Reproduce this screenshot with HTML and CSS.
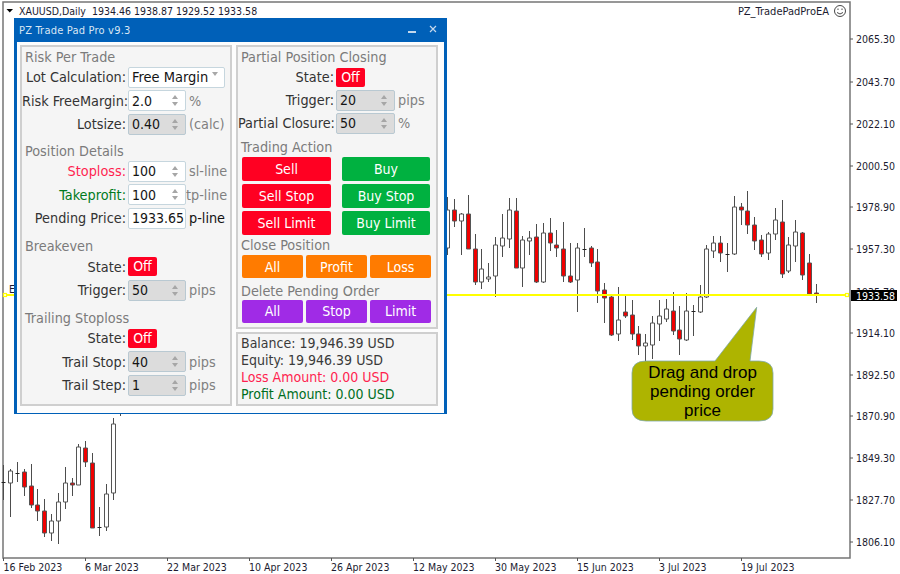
FILE: index.html
```html
<!DOCTYPE html>
<html lang="en">
<head>
<meta charset="utf-8">
<title>PZ Trade Pad Pro</title>
<link rel="stylesheet" href="styles.css">
</head>
<body>
<main class="screen">
  <svg class="chart" width="900" height="574" viewBox="0 0 900 574">
    <path class="frame" d="M3 2H850V558H3Z"/>
    <path class="frame-ticks" d="M850 39h3M850 82h3M850 124h3M850 166h3M850 207h3M850 249h3M850 333h3M850 375h3M850 416h3M850 458h3M850 500h3M850 542h3M3.500 558v3M85.500 558v3M167.500 558v3M249.500 558v3M331.500 558v3M413.500 558v3M495.500 558v3M577.500 558v3M659.500 558v3M741.500 558v3"/>
    <path class="tri" d="M6.500 9H13L9.750 12.500Z"/>
    <text class="t" x="19" y="15">XAUUSD,Daily&#160; 1934.46 1938.87 1929.52 1933.58</text>
    <text class="t t-name" x="829" y="15" text-anchor="end">PZ_TradePadProEA</text>
    <g class="smile">
      <circle cx="840" cy="11" r="5.500"/>
      <path d="M837 12.500q3 3 6 0"/>
      <path d="M838 8.500v1.500M842 8.500v1.500"/>
    </g>
    <text class="t" x="9" y="293">E</text>

    <path class="wick" d="M3.500 465V500M10.500 469V517M17.500 462V482M24.500 469V496M31.500 464V508M37.500 489V521M44.500 499V537M51.500 514V541M58.500 493V544M65.500 467V509M72.500 478V496M78.500 444V485M85.500 441V467M92.500 453V528M99.500 507V536M106.500 484V531M113.500 418V500M120.500 410V416
    M447.500 197V255M454.500 199V227M461.500 213V255M468.500 195V249M475.500 234V285M481.500 249V289M488.500 263V282M495.500 237V297M502.500 214V257M509.500 198V248M516.500 198V268M522.500 236V287M529.500 231V255M536.500 224V283M543.500 223V283M550.500 218V251M556.500 230V257M563.500 222V282M570.500 243V283M577.500 243V312M584.500 228V257M591.500 246V267M597.500 249V303M604.500 283V323M611.500 295V336M618.500 287V341M625.500 295V318M632.500 300V340M638.500 326V355M645.500 334V367M652.500 316V359M659.500 300V341M666.500 299V322M673.500 292V335M679.500 306V355M686.500 293V341M693.500 305V336M700.500 285V313M706.500 245V298M713.500 236V258M720.500 236V262M727.500 243V272M734.500 196V255M741.500 203V225M747.500 191V234M754.500 217V250M761.500 235V257M768.500 232V260M775.500 208V240M782.500 200V278M788.500 237V273M795.500 220V262M802.500 232V280M809.500 254V296M816.500 284V303"/>
    <path class="doji" d="M1.500 482.500h4M15.500 473.500h4M97.500 527.500h4M582.500 249.500h4M691.500 311.500h4M725.500 254.500h4"/>
    <path class="white" d="M8.500 471h4v12h-4zM49.500 521h4v12h-4zM56.500 502h4v19h-4zM63.500 483h4v19h-4zM76.500 447h4v38h-4zM104.500 494h4v33h-4zM111.500 424h4v69h-4z
    M445.500 210h4v38h-4zM459.500 214h4v7h-4zM479.500 269h4v13h-4zM486.500 277h4v2h-4zM493.500 245h4v31h-4zM500.500 238h4v8h-4zM507.500 210h4v29h-4zM520.500 240h4v28h-4zM527.500 238h4v3h-4zM541.500 233h4v49h-4zM575.500 248h4v32h-4zM616.500 320h4v14h-4zM643.500 343h4v3h-4zM650.500 323h4v22h-4zM657.500 316h4v8h-4zM664.500 309h4v10h-4zM684.500 311h4v29h-4zM698.500 297h4v15h-4zM704.500 249h4v48h-4zM711.500 243h4v8h-4zM732.500 207h4v47h-4zM766.500 234h4v19h-4zM773.500 220h4v14h-4zM786.500 245h4v26h-4zM793.500 232h4v14h-4z"/>
    <path class="red" d="M22.500 472h4v15h-4zM29.500 486h4v19h-4zM35.500 505h4v6h-4zM42.500 511h4v22h-4zM70.500 483h4v2h-4zM83.500 448h4v14h-4zM90.500 463h4v65h-4z
    M452.500 210h4v11h-4zM466.500 214h4v35h-4zM473.500 249h4v33h-4zM514.500 211h4v57h-4zM534.500 237h4v45h-4zM548.500 233h4v10h-4zM554.500 245h4v3h-4zM561.500 249h4v27h-4zM568.500 276h4v6h-4zM589.500 248h4v15h-4zM595.500 262h4v29h-4zM602.500 290h4v8h-4zM609.500 297h4v38h-4zM623.500 312h4v4h-4zM630.500 315h4v19h-4zM636.500 334h4v12h-4zM671.500 311h4v20h-4zM677.500 330h4v9h-4zM718.500 243h4v10h-4zM739.500 207h4v3h-4zM745.500 211h4v14h-4zM752.500 225h4v16h-4zM759.500 240h4v14h-4zM780.500 222h4v52h-4zM800.500 233h4v42h-4zM807.500 263h4v31h-4zM814.500 293h4v2h-4z"/>

    <path class="price-line" d="M5 295H847"/>
    <rect class="anchor" x="3.500" y="293.500" width="3" height="3"/>
    <rect class="anchor" x="845.500" y="293.500" width="3" height="3"/>

    <text class="t" x="856" y="43">2065.30</text>
    <text class="t" x="856" y="86">2043.70</text>
    <text class="t" x="856" y="128">2022.10</text>
    <text class="t" x="856" y="170">2000.50</text>
    <text class="t" x="856" y="211">1978.90</text>
    <text class="t" x="856" y="253">1957.30</text>
    <text class="t" x="856" y="295.500">1935.70</text>
    <rect class="price-tag" x="851" y="290" width="46" height="11"/>
    <text class="t price-tag-text" x="856" y="299.500">1933.58</text>
    <text class="t" x="856" y="337">1914.10</text>
    <text class="t" x="856" y="379">1892.50</text>
    <text class="t" x="856" y="420">1870.90</text>
    <text class="t" x="856" y="462">1849.30</text>
    <text class="t" x="856" y="504">1827.70</text>
    <text class="t" x="856" y="546">1806.10</text>

    <text class="t" x="3.500" y="571">16 Feb 2023</text>
    <text class="t" x="85" y="571">6 Mar 2023</text>
    <text class="t" x="167" y="571">22 Mar 2023</text>
    <text class="t" x="249" y="571">10 Apr 2023</text>
    <text class="t" x="331" y="571">26 Apr 2023</text>
    <text class="t" x="413" y="571">12 May 2023</text>
    <text class="t" x="495" y="571">30 May 2023</text>
    <text class="t" x="577" y="571">15 Jun 2023</text>
    <text class="t" x="659" y="571">3 Jul 2023</text>
    <text class="t" x="741" y="571">19 Jul 2023</text>

    <path class="callout" d="M646 361H715L756.700 307.300L750 361H759Q773 361 773 373V409Q773 421 759 421H646Q632 421 632 409V373Q632 361 646 361Z"/>
    <text class="callout-text" x="702.500" y="378">Drag and drop</text>
    <text class="callout-text" x="702.500" y="397">pending order</text>
    <text class="callout-text" x="702.500" y="416">price</text>
  </svg>

  <section class="tradepad">
    <header class="titlebar">
      <span class="title">PZ Trade Pad Pro v9.3</span>
      <span class="win-min"></span>
      <svg class="win-close" width="8" height="8" viewBox="0 0 8 8"><path d="M1 1L7 7M7 1L1 7"/></svg>
    </header>
    <div class="pad-body">
      <div class="group col-left">
        <h2 class="heading">Risk Per Trade</h2>
        <div class="rows">
          <div class="row"><span class="label">Lot Calculation:</span><span class="field combo"><span class="value">Free Margin</span><i class="combo-arrow"></i></span></div>
          <div class="row"><span class="label">Risk FreeMargin:</span><span class="field"><span class="value">2.0</span><i class="spin"></i></span><span class="unit">%</span></div>
          <div class="row"><span class="label">Lotsize:</span><span class="field off"><span class="value">0.40</span><i class="spin"></i></span><span class="unit">(calc)</span></div>
        </div>
        <h2 class="heading gap-position">Position Details</h2>
        <div class="rows">
          <div class="row"><span class="label loss">Stoploss:</span><span class="field"><span class="value">100</span><i class="spin"></i></span><span class="unit">sl-line</span></div>
          <div class="row"><span class="label profit">Takeprofit:</span><span class="field"><span class="value">100</span><i class="spin"></i></span><span class="unit tight">tp-line</span></div>
          <div class="row"><span class="label">Pending Price:</span><span class="field"><span class="value">1933.65</span></span><span class="unit dark">p-line</span></div>
        </div>
        <h2 class="heading gap-breakeven">Breakeven</h2>
        <div class="rows">
          <div class="row"><span class="label">State:</span><span class="state">Off</span></div>
          <div class="row"><span class="label">Trigger:</span><span class="field off"><span class="value">50</span><i class="spin"></i></span><span class="unit">pips</span></div>
        </div>
        <h2 class="heading gap-trailing">Trailing Stoploss</h2>
        <div class="rows">
          <div class="row"><span class="label">State:</span><span class="state">Off</span></div>
          <div class="row"><span class="label">Trail Stop:</span><span class="field off"><span class="value">40</span><i class="spin"></i></span><span class="unit">pips</span></div>
          <div class="row"><span class="label">Trail Step:</span><span class="field off"><span class="value">1</span><i class="spin"></i></span><span class="unit">pips</span></div>
        </div>
      </div>
      <div class="col-right">
        <div class="group actions">
          <h2 class="heading">Partial Position Closing</h2>
          <div class="rows rows-tight">
            <div class="row"><span class="label">State:</span><span class="state">Off</span></div>
            <div class="row"><span class="label">Trigger:</span><span class="field off"><span class="value">20</span><i class="spin"></i></span><span class="unit">pips</span></div>
            <div class="row"><span class="label">Partial Closure:</span><span class="field off"><span class="value">50</span><i class="spin"></i></span><span class="unit">%</span></div>
          </div>
          <h2 class="heading gap-trading">Trading Action</h2>
          <div class="btn-two">
            <button class="btn sell">Sell</button><button class="btn buy">Buy</button>
            <button class="btn sell">Sell Stop</button><button class="btn buy">Buy Stop</button>
            <button class="btn sell">Sell Limit</button><button class="btn buy">Buy Limit</button>
          </div>
          <h2 class="heading gap-close">Close Position</h2>
          <div class="btn-three">
            <button class="btn close">All</button><button class="btn close">Profit</button><button class="btn close">Loss</button>
          </div>
          <h2 class="heading gap-delete">Delete Pending Order</h2>
          <div class="btn-three">
            <button class="btn del">All</button><button class="btn del">Stop</button><button class="btn del">Limit</button>
          </div>
        </div>
        <div class="group summary">
          <p>Balance: 19,946.39 USD</p>
          <p>Equity: 19,946.39 USD</p>
          <p class="loss">Loss Amount: 0.00 USD</p>
          <p class="profit">Profit Amount: 0.00 USD</p>
        </div>
      </div>
    </div>
  </section>
</main>
</body>
</html>
```
FILE: styles.css
```css
* { box-sizing: border-box; }
html, body { margin: 0; padding: 0; background: #fff; }
body { width: 900px; height: 574px; overflow: hidden; font-family: "DejaVu Sans", "Noto Sans", sans-serif; font-stretch: condensed; }
.screen { position: relative; width: 900px; height: 574px; }

/* chart canvas */
.chart { position: absolute; left: 0; top: 0; display: block; }
.frame { fill: none; stroke: #757575; stroke-width: 1.5; }
.frame-ticks { fill: none; stroke: #555; stroke-width: 1; }
.tri { fill: #000; }
.t { font-family: "DejaVu Sans", sans-serif; font-stretch: condensed; font-size: 10.500px; fill: #1c1c30; }
.t-name { font-size: 11px; }
.smile { fill: none; stroke: #333; stroke-width: 0.9; }
.wick { fill: none; stroke: #4d4d4d; stroke-width: 1; }
.doji { fill: none; stroke: #222; stroke-width: 1; }
.white { fill: #fff; stroke: #555; stroke-width: 1; }
.red { fill: #f00000; stroke: #555; stroke-width: 1; }
.price-line { fill: none; stroke: #ffff00; stroke-width: 2; }
.anchor { fill: #fff; stroke: #ffff00; stroke-width: 1.2; }
.price-tag { fill: #000; }
.price-tag-text { fill: #fff; }
.callout { fill: #aeb400; stroke: #7fa8a8; stroke-width: 0.8; }
.callout-text { font-family: "Liberation Sans", Arial, sans-serif; font-size: 17px; fill: #000; text-anchor: middle; }

/* floating trade pad window */
.tradepad { position: absolute; left: 14px; top: 18px; width: 433px; height: 396px; background: #0060b8; padding: 0 3px 3px; display: flex; flex-direction: column; }
.titlebar { height: 24px; display: flex; align-items: center; color: #d8e6f4; flex: none; }
.title { font-size: 11px; letter-spacing: 0.2px; margin-left: 2px; flex: 1; }
.win-min { width: 8px; height: 1.500px; background: #c4d8ec; margin: 4px 13px 0 0; }
.win-close { margin-right: 7px; margin-top: -2px; }
.win-close path { stroke: #c4d8ec; stroke-width: 1.200; fill: none; }
.pad-body { flex: 1; display: flex; gap: 4px; background: #fdfdfd; padding: 3px 6px 7px 3px; }
.group { background: #f5f5f5; border: 2px solid #cfcfcf; }
.col-left { width: 212px; flex: none; }
.col-right { width: 202px; flex: none; display: flex; flex-direction: column; gap: 3px; }
.actions { height: 283.500px; flex: none; }
.summary { flex: 1; padding: 1px 3px 0; }
.summary p { margin: 0; font-size: 14px; line-height: 17.300px; color: #3a3a3a; white-space: nowrap; }

.heading { margin: 0; padding-left: 3px; height: 19.500px; line-height: 20px; font-size: 14.300px; font-weight: 400; color: #7b7b7b; white-space: nowrap; }
.gap-position { margin-top: 6.500px; }
.gap-breakeven { margin-top: 7.500px; height: 20px; }
.gap-trailing { margin-top: 7.500px; }
.gap-trading { margin-top: 3px; height: 20.500px; }
.gap-close { margin-top: 0; height: 20.500px; }
.gap-delete { margin-top: 3px; height: 18.500px; }

.rows { display: flex; flex-direction: column; gap: 2.500px; }
.rows-tight { gap: 2px; }
.row { display: flex; align-items: center; height: 21px; }
.label { width: 104px; flex: none; text-align: right; margin-right: 2px; font-size: 14.300px; color: #333; white-space: nowrap; }
.actions .label { width: 96px; }
.actions .field { width: 59px; }
.loss { color: #ff1f4f; }
.profit { color: #007a20; }
.label.loss { color: #ff1f4f; }
.label.profit { color: #007a20; }
.summary .loss { color: #ff1f4f; }
.summary .profit { color: #006e1e; }

.field { width: 58px; height: 21px; flex: none; display: flex; align-items: center; background: #fff; border: 1px solid #c6d6de; border-radius: 2px; padding: 0 6px 0 3px; position: relative; font-size: 14px; color: #141414; white-space: nowrap; }
.field.off { background: #dcdcdc; border-color: #b9c9d2; }
.value { flex: 1; }
.combo { width: 97px; font-size: 14.500px; }
.combo-arrow { width: 0; height: 0; border: 3.500px solid transparent; border-top: 4px solid #a8a8a8; border-bottom: 0; margin-top: -6px; }
.spin { width: 7px; height: 11px; flex: none; position: relative; }
.spin::before, .spin::after { content: ""; position: absolute; left: 0; border: 3.500px solid transparent; }
.spin::before { top: 0; border-top: 0; border-bottom: 4px solid #a6a6a6; }
.spin::after { bottom: 0; border-bottom: 0; border-top: 4px solid #a6a6a6; }
.unit { margin-left: 3px; font-size: 14.300px; color: #808080; white-space: nowrap; }
.unit.tight { margin-left: 0; }
.unit.dark { color: #111; }
.state { width: 29px; height: 19px; line-height: 19px; text-align: center; background: #ff0022; color: #fff; font-size: 14px; border-radius: 2px; }

.btn-two, .btn-three { display: grid; margin-left: 4px; }
.btn-two { grid-template-columns: 89px 88px; grid-auto-rows: 23.500px; column-gap: 11px; row-gap: 3.500px; }
.btn-three { grid-template-columns: 61px 61px 61px; grid-auto-rows: 23px; column-gap: 3px; }
.btn { margin: 0; padding: 0; border: 1px solid transparent; border-radius: 2px; font-family: inherit; font-stretch: condensed; font-size: 14px; color: #fff; }
.sell { background: #ff0022; }
.buy { background: #00b140; }
.close { background: #ff7b00; }
.del { background: #a02be6; }
```
